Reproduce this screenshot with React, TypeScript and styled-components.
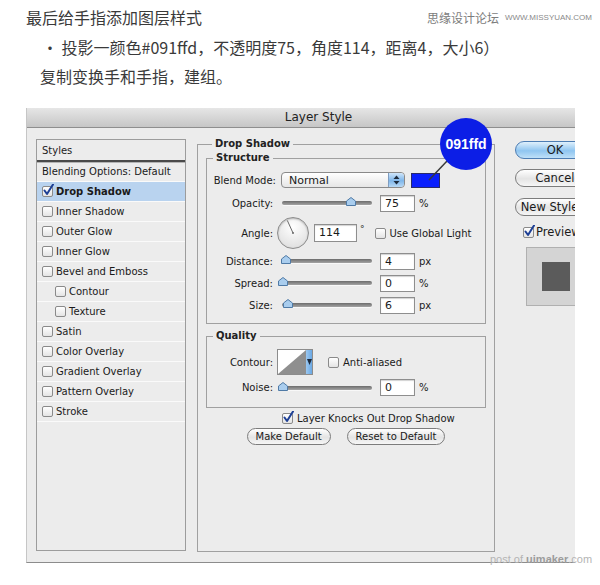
import React from "react";
import styled, { createGlobalStyle } from "styled-components";

const CJK = `"Noto Sans CJK SC", "Noto Sans", sans-serif`;
const UI = `"DejaVu Sans", "Liberation Sans", sans-serif`;

const GlobalStyle = createGlobalStyle`
  html, body {
    margin: 0;
    padding: 0;
    background: #ffffff;
  }
  body {
    width: 600px;
    height: 585px;
    overflow: hidden;
  }
`;

const STYLE_ITEMS = [
  { name: "Drop Shadow", checked: true, active: true },
  { name: "Inner Shadow" },
  { name: "Outer Glow" },
  { name: "Inner Glow" },
  { name: "Bevel and Emboss" },
  { name: "Contour", indent: true },
  { name: "Texture", indent: true },
  { name: "Satin" },
  { name: "Color Overlay" },
  { name: "Gradient Overlay" },
  { name: "Pattern Overlay" },
  { name: "Stroke" },
];

const Check = ({ checked }: { checked?: boolean }) => (
  <CheckBox>
    {checked && (
      <svg width="13" height="13" viewBox="0 0 13 13">
        <path
          d="M2.5 6.5 L5 10 L11 0.5"
          fill="none"
          stroke="#1d3f95"
          strokeWidth="2"
          strokeLinecap="round"
          strokeLinejoin="round"
        />
      </svg>
    )}
  </CheckBox>
);

const Slider = ({ value }: { value: number }) => (
  <SliderBox>
    <Track />
    <Thumb style={{ left: `${value * 0.9}px` }}>
      <svg width="10" height="9" viewBox="0 0 10 9">
        <path
          d="M5 0.5 L9.5 4 L9.5 8.5 L0.5 8.5 L0.5 4 Z"
          fill="#a9cdee"
          stroke="#4f7aa6"
          strokeWidth="1"
          strokeLinejoin="round"
        />
      </svg>
    </Thumb>
  </SliderBox>
);

const NumberRow = ({
  label,
  value,
  slider,
  unit,
  h,
}: {
  label: string;
  value: string;
  slider: number;
  unit: string;
  h: number;
}) => (
  <Row $h={h}>
    <Label>{label}</Label>
    <Slider value={slider} />
    <Field>{value}</Field>
    <Unit>{unit}</Unit>
  </Row>
);

const App = () => {
  return (
    <Page>
      <GlobalStyle />
      <TitleRow>
        <Title>最后给手指添加图层样式</Title>
        <Watermark>
          思缘设计论坛<small>WWW.MISSYUAN.COM</small>
        </Watermark>
      </TitleRow>
      <Line $top={8} $indent={16}>
        · 投影一颜色#091ffd，不透明度75，角度114，距离4，大小6）
      </Line>
      <Line $top={7} $indent={14}>
        复制变换手和手指，建组。
      </Line>

      <WindowClip>
        <Window>
          <TitleBar>Layer Style</TitleBar>
          <Body>
            <StylesList>
              <StylesHeader>Styles</StylesHeader>
              <StyleRow>Blending Options: Default</StyleRow>
              {STYLE_ITEMS.map((s) => (
                <StyleRow key={s.name} $active={s.active} $indent={s.indent}>
                  <Check checked={s.checked} />
                  {s.name}
                </StyleRow>
              ))}
            </StylesList>

            <MainPanel>
              <Legend>Drop Shadow</Legend>
              <Group>
                <Legend>Structure</Legend>
                <GroupBody $pt={8} $pb={6}>
                  <Row $h={18}>
                    <Label $w={69}>Blend Mode:</Label>
                    <Select>
                      Normal
                      <Stepper>
                        <svg width="7" height="10" viewBox="0 0 7 10">
                          <path d="M3.5 0.5 L6.5 4 L0.5 4 Z" fill="#1c2a3c" />
                          <path d="M3.5 9.5 L6.5 6 L0.5 6 Z" fill="#1c2a3c" />
                        </svg>
                      </Stepper>
                    </Select>
                    <Swatch />
                  </Row>
                  <NumberRow label="Opacity:" value="75" slider={75} unit="%" h={28} />
                  <Row $h={32}>
                    <Label>Angle:</Label>
                    <Dial>
                      <svg width="32" height="32" viewBox="0 0 32 32">
                        <line
                          x1="16"
                          y1="16"
                          x2="10.3"
                          y2="3.4"
                          stroke="#6a6a6a"
                          strokeWidth="1"
                        />
                        <circle cx="16" cy="16" r="1" fill="#6a6a6a" />
                      </svg>
                    </Dial>
                    <AngleField>114</AngleField>
                    <Degree>°</Degree>
                    <CheckLabel $ml={10}>
                      <Check />
                      Use Global Light
                    </CheckLabel>
                  </Row>
                  <NumberRow label="Distance:" value="4" slider={3} unit="px" h={24} />
                  <NumberRow label="Spread:" value="0" slider={0} unit="%" h={20} />
                  <NumberRow label="Size:" value="6" slider={5} unit="px" h={24} />
                </GroupBody>
              </Group>

              <Group $top={7}>
                <Legend>Quality</Legend>
                <GroupBody $pt={8} $pb={7}>
                  <Row $h={26}>
                    <Label>Contour:</Label>
                    <ContourThumb>
                      <svg width="28" height="24" viewBox="0 0 28 24">
                        <path d="M0 24 L28 0 L28 24 Z" fill="#8f8f8f" />
                      </svg>
                      <ContourArrow>
                        <svg width="5" height="8" viewBox="0 0 5 8">
                          <path d="M0 1 L5 1 L2.5 7 Z" fill="#1c2a3c" />
                        </svg>
                      </ContourArrow>
                    </ContourThumb>
                    <CheckLabel $ml={15}>
                      <Check />
                      Anti-aliased
                    </CheckLabel>
                  </Row>
                  <NumberRow label="Noise:" value="0" slider={0} unit="%" h={25} />
                </GroupBody>
              </Group>

              <KnockRow>
                <CheckLabel>
                  <Check checked />
                  Layer Knocks Out Drop Shadow
                </CheckLabel>
              </KnockRow>
              <ButtonRow>
                <PillButton>Make Default</PillButton>
                <PillButton>Reset to Default</PillButton>
              </ButtonRow>
            </MainPanel>

            <RightCol>
              <SideButton $primary $top={2}>OK</SideButton>
              <SideButton $top={10}>Cancel</SideButton>
              <SideButton $top={11}>New Style...</SideButton>
              <PreviewRow>
                <Check checked />
                Preview
              </PreviewRow>
              <PreviewBox>
                <PreviewSquare />
              </PreviewBox>
            </RightCol>
          </Body>

          <Leader width="30" height="30" viewBox="0 0 30 30">
            <line x1="25" y1="2" x2="6" y2="22" stroke="#3a3a3a" strokeWidth="1.5" />
          </Leader>
          <Bubble>091ffd</Bubble>
        </Window>
      </WindowClip>

      <Credit>
        post of <b>uimaker</b>.com
      </Credit>
    </Page>
  );
};

export default App;

const Page = styled.div`
  position: relative;
  box-sizing: border-box;
  width: 600px;
  height: 585px;
  padding: 6px 0 0 26px;
  background: #ffffff;
`;

const TitleRow = styled.div`
  display: flex;
  align-items: center;
  justify-content: space-between;
  height: 22px;
  padding-right: 8px;
`;

const Title = styled.div`
  font-family: ${CJK};
  font-size: 16px;
  line-height: 22px;
  color: #3a3a3a;
`;

const Watermark = styled.div`
  display: flex;
  align-items: center;
  gap: 6px;
  font-family: ${CJK};
  font-size: 12px;
  color: #7c7c7c;

  small {
    font-family: "Liberation Sans", sans-serif;
    font-size: 8px;
    color: #8a8a8a;
  }
`;

const Line = styled.div<{ $top: number; $indent: number }>`
  margin-top: ${(p) => p.$top}px;
  padding-left: ${(p) => p.$indent}px;
  height: 22px;
  font-family: ${CJK};
  font-size: 16px;
  line-height: 22px;
  color: #3a3a3a;
`;

const WindowClip = styled.div`
  margin-top: 21px;
  width: 549px;
  height: 455px;
  overflow: hidden;
`;

const Window = styled.div`
  position: relative;
  box-sizing: border-box;
  width: 584px;
  height: 455px;
  background: #ececec;
  border-left: 1px solid #c6c6c6;
  border-bottom: 1px solid #8c8c8c;
  font-family: ${UI};
  color: #1a1a1a;
`;

const TitleBar = styled.div`
  box-sizing: border-box;
  height: 20px;
  border-bottom: 1px solid #8e8e8e;
  background: linear-gradient(#e6e6e6, #c6c6c6);
  text-align: center;
  font-size: 12px;
  line-height: 19px;
  color: #222222;
`;

const Body = styled.div`
  display: flex;
  align-items: flex-start;
  padding: 11px 0 0 9px;
`;

const StylesList = styled.div`
  box-sizing: border-box;
  display: flex;
  flex-direction: column;
  width: 150px;
  height: 412px;
  border: 1px solid #9c9c9c;
  background: #ececec;
  font-size: 10px;
`;

const StylesHeader = styled.div`
  display: flex;
  align-items: center;
  height: 20px;
  padding-left: 5px;
  border-bottom: 2px solid #4a4a4a;
  box-shadow: 0 1px 0 #b4b4b4;
  color: #222222;
`;

const StyleRow = styled.div<{ $active?: boolean; $indent?: boolean }>`
  box-sizing: border-box;
  display: flex;
  align-items: center;
  gap: 3px;
  height: 20px;
  padding-left: ${(p) => (p.$indent ? 18 : 5)}px;
  border-bottom: 1px solid #fafafa;
  background: ${(p) => (p.$active ? "#b9d3ef" : "transparent")};
  font-weight: ${(p) => (p.$active ? 700 : 400)};
`;

const CheckBox = styled.span`
  position: relative;
  box-sizing: border-box;
  flex: none;
  display: inline-block;
  width: 11px;
  height: 11px;
  border: 1px solid #8a8a8a;
  border-radius: 2px;
  background: linear-gradient(#ffffff, #e4e4e4);

  svg {
    position: absolute;
    left: -1px;
    top: -3px;
  }
`;

const MainPanel = styled.fieldset`
  box-sizing: border-box;
  width: 298px;
  height: 413px;
  margin: 0 0 0 11px;
  padding: 4px 8px 0;
  border: 1px solid #a0a0a0;
  min-width: 0;
`;

const Legend = styled.legend`
  margin-left: 6px;
  padding: 0 3px;
  font-size: 10px;
  line-height: 10px;
  font-weight: 700;
  color: #222222;
`;

const Group = styled.fieldset<{ $top?: number }>`
  margin: ${(p) => p.$top ?? 0}px 0 0;
  padding: 0;
  border: 1px solid #a0a0a0;
  min-width: 0;
`;

const GroupBody = styled.div<{ $pt: number; $pb: number }>`
  display: flex;
  flex-direction: column;
  padding: ${(p) => p.$pt}px 0 ${(p) => p.$pb}px;
`;

const Row = styled.div<{ $h: number }>`
  display: flex;
  align-items: center;
  height: ${(p) => p.$h}px;
  font-size: 10px;
`;

const Label = styled.span<{ $w?: number }>`
  flex: none;
  width: ${(p) => p.$w ?? 66}px;
  margin-right: 5px;
  text-align: right;
  white-space: nowrap;
`;

const Select = styled.div`
  box-sizing: border-box;
  display: flex;
  align-items: center;
  justify-content: space-between;
  width: 124px;
  height: 16px;
  padding-left: 7px;
  border: 1px solid #8a8a8a;
  border-radius: 4px;
  background: linear-gradient(#ffffff, #e6e6e6);
  font-size: 11px;
  overflow: hidden;
`;

const Stepper = styled.span`
  display: flex;
  align-items: center;
  justify-content: center;
  width: 15px;
  height: 14px;
  border-left: 1px solid #7e9cc0;
  border-radius: 0 3px 3px 0;
  background: linear-gradient(#cfe6fb, #7fb6ea 55%, #b9daf6);
`;

const Swatch = styled.span`
  box-sizing: border-box;
  width: 29px;
  height: 15px;
  margin-left: 6px;
  border: 1px solid #2a2a6a;
  background: #0a1ffd;
`;

const SliderBox = styled.div`
  position: relative;
  width: 98px;
  height: 12px;
  display: flex;
  align-items: center;
`;

const Track = styled.div`
  width: 90px;
  height: 4px;
  margin: 0 4px;
  border-radius: 2px;
  background: linear-gradient(#6c6c6c, #a4a4a4);
  box-shadow: 0 1px 0 #f8f8f8;
`;

const Thumb = styled.span`
  position: absolute;
  top: 0;
  width: 10px;
  height: 9px;
  display: flex;
`;

const Field = styled.div`
  box-sizing: border-box;
  width: 35px;
  height: 17px;
  margin-left: 4px;
  padding-left: 4px;
  border: 1px solid #8e8e8e;
  background: #ffffff;
  box-shadow: inset 0 1px 1px rgba(0, 0, 0, 0.18);
  font-size: 11px;
  line-height: 15px;
`;

const AngleField = styled(Field)`
  width: 43px;
  height: 18px;
  margin-left: 5px;
  line-height: 16px;
`;

const Unit = styled.span`
  margin-left: 4px;
`;

const Degree = styled.span`
  margin: -8px 0 0 3px;
  font-size: 9px;
`;

const Dial = styled.div`
  box-sizing: border-box;
  width: 32px;
  height: 32px;
  margin-left: -1px;
  border: 1px solid #8c8c8c;
  border-radius: 50%;
  background: radial-gradient(circle at 50% 30%, #ffffff, #d9d9d9);
  box-shadow: inset 0 1px 2px rgba(0, 0, 0, 0.25);

  svg {
    display: block;
    margin: -1px;
  }
`;

const CheckLabel = styled.span<{ $ml?: number }>`
  display: flex;
  align-items: center;
  gap: 4px;
  margin-left: ${(p) => p.$ml ?? 0}px;
  font-size: 10px;
  white-space: nowrap;
`;

const ContourThumb = styled.div`
  box-sizing: border-box;
  display: flex;
  width: 36px;
  height: 26px;
  margin-left: -1px;
  border: 1px solid #8c8c8c;
  background: #ffffff;

  svg {
    display: block;
  }
`;

const ContourArrow = styled.span`
  display: flex;
  align-items: center;
  justify-content: center;
  width: 6px;
  background: linear-gradient(90deg, #9cc8f0, #6aa8e4);
`;

const KnockRow = styled.div`
  display: flex;
  height: 12px;
  margin-top: 4px;
  padding-left: 76px;
  align-items: center;
`;

const ButtonRow = styled.div`
  display: flex;
  justify-content: center;
  gap: 16px;
  margin-top: 4px;
`;

const PillButton = styled.button`
  box-sizing: border-box;
  height: 17px;
  padding: 0 8px;
  border: 1px solid #7c7c7c;
  border-radius: 9px;
  background: linear-gradient(#ffffff, #e4e4e4 55%, #f6f6f6);
  font-family: ${UI};
  font-size: 10px;
  line-height: 15px;
  color: #1a1a1a;
`;

const RightCol = styled.div`
  display: flex;
  flex-direction: column;
  width: 80px;
  margin-left: 20px;
`;

const SideButton = styled.div<{ $primary?: boolean; $top: number }>`
  box-sizing: border-box;
  height: 18px;
  margin-top: ${(p) => p.$top}px;
  border: 1px solid ${(p) => (p.$primary ? "#4d7db3" : "#7c7c7c")};
  border-radius: 9px;
  background: ${(p) =>
    p.$primary
      ? "linear-gradient(#dff0fc, #8fc5f0 55%, #bfe0f8)"
      : "linear-gradient(#ffffff, #e4e4e4 55%, #f6f6f6)"};
  text-align: center;
  font-size: 11.5px;
  line-height: 16px;
  white-space: nowrap;
  overflow: hidden;
`;

const PreviewRow = styled.div`
  display: flex;
  align-items: center;
  gap: 2px;
  height: 12px;
  margin-top: 10px;
  padding-left: 8px;
  font-size: 11.5px;
  white-space: nowrap;
`;

const PreviewBox = styled.div`
  box-sizing: border-box;
  display: flex;
  align-items: center;
  width: 70px;
  height: 59px;
  margin: 9px 0 0 11px;
  padding-left: 15px;
  border: 1px solid #b0b0b0;
  background: #d4d4d4;
`;

const PreviewSquare = styled.div`
  width: 28px;
  height: 29px;
  background: #5b5b5b;
`;

const Bubble = styled.div`
  position: absolute;
  left: 413px;
  top: 10px;
  width: 52px;
  height: 52px;
  border-radius: 50%;
  background: #0c1ee6;
  color: #ffffff;
  font-family: "Liberation Sans", sans-serif;
  font-weight: 700;
  font-size: 14px;
  line-height: 52px;
  text-align: center;
`;

const Leader = styled.svg`
  position: absolute;
  left: 396px;
  top: 50px;
`;

const Credit = styled.div`
  position: absolute;
  left: 490px;
  top: 553px;
  font-family: "Liberation Sans", sans-serif;
  font-size: 11px;
  color: #b4b4b4;

  b {
    color: #9c9c9c;
  }
`;
